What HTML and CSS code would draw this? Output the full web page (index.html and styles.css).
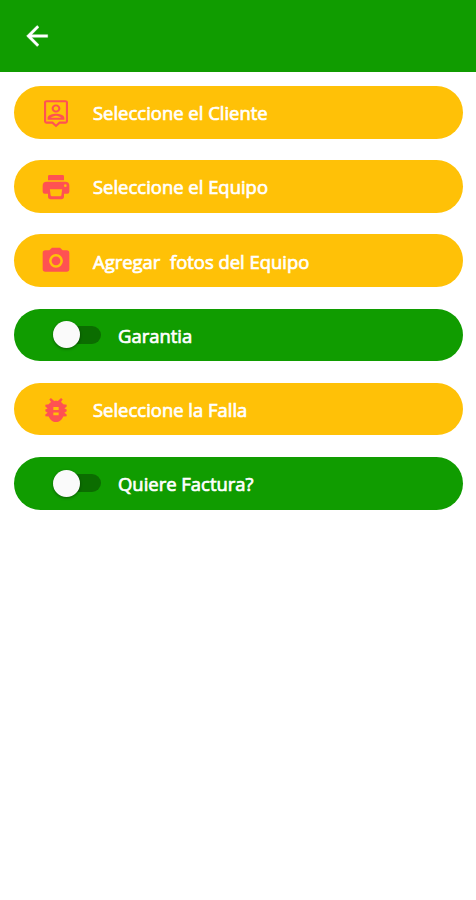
FILE: index.html
```html
<!DOCTYPE html>
<html lang="es">

<head>
    <meta charset="UTF-8">
    <meta name="viewport" content="width=device-width, initial-scale=1.0">
    <title>Orden</title>
    <link rel="stylesheet" href="styles.css">
</head>

<body>
    <header class="toolbar">
        <svg class="back" viewBox="0 0 24 24">
            <path d="M20 11v2H8l5.500 5.500-1.420 1.420L4.160 12l7.920-7.920L13.500 5.500 8 11h12z" />
        </svg>
    </header>
    <div class="list">
        <div class="item">
            <svg class="icon" viewBox="0 0 24 24">
                <path d="M19 2.400H5c-1.100 0-2 .7-2 1.600v14c0 1.100.9 2 2 2h4l3 2.700 3-2.700h4c1.100 0 2-.9 2-2V4c0-.9-.9-1.600-2-1.600zm.4 16h-5L12 20.600l-2.400-2.200H4.600V4h14.800v14.400zM12 11.600c1.850 0 3.300-1.350 3.300-3s-1.450-3-3.300-3-3.300 1.350-3.300 3 1.450 3 3.300 3zm0-4.600c.95 0 1.700.73 1.700 1.600s-.75 1.600-1.700 1.600-1.700-.73-1.700-1.600.75-1.600 1.700-1.600zM18.300 15.800c0-2.400-4-3.300-6.300-3.300s-6.300.9-6.300 3.300V17h12.600v-1.200zM8.200 15.500c.74-.7 2.300-1.500 3.800-1.500s3.060.8 3.800 1.500H8.200z" />
            </svg>
            <span class="text">Seleccione el Cliente</span>
        </div>
        <div class="item">
            <svg class="icon" viewBox="0 0 24 24">
                <path d="M7 3h10a1 1 0 0 1 1 1v3H6V4a1 1 0 0 1 1-1M19 12a1 1 0 0 1-1-1 1 1 0 0 1 1-1 1 1 0 0 1 1 1 1 1 0 0 1-1 1m-3 6.300L15.300 19H8.700L8 18.300 7.400 13.700h9.200m2.400-5.700H5a3 3 0 0 0-3 3v4.500a1.500 1.500 0 0 0 1.500 1.500H6v2.200a2 2 0 0 0 2 2h8a2 2 0 0 0 2-2V17h2.500a1.500 1.500 0 0 0 1.500-1.500V11a3 3 0 0 0-3-3z" />
            </svg>
            <span class="text">Seleccione el Equipo</span>
        </div>
        <div class="item">
            <svg class="icon" viewBox="0 0 24 24">
                <path d="M4 4h3l2-2h6l2 2h3a2 2 0 0 1 2 2v12a2 2 0 0 1-2 2H4a2 2 0 0 1-2-2V6a2 2 0 0 1 2-2m8 2.700a5.200 5.200 0 1 0 0 10.400 5.200 5.200 0 1 0 0-10.400m0 1.900a3.300 3.300 0 1 1 0 6.600 3.300 3.300 0 1 1 0-6.600z" />
            </svg>
            <span class="text">Agregar  fotos del Equipo</span>
        </div>
        <div class="item green">
            <div class="switch">
                <div class="thumb"></div>
            </div>
            <span class="text">Garantia</span>
        </div>
        <div class="item">
            <svg class="icon" viewBox="0 0 24 24">
                <path d="M20 8l-2.600-.3c-.4-.7-1-1.200-1.700-1.700L17 4.200 15.800 3l-2.400 2.170C12.960 5.060 12.490 5 12 5s-.96.06-1.410.17L8.200 3 7 4.200l1.300 1.800c-.7.5-1.300 1-1.700 1.700L4 8v1.300l1.700 1.500L4 11.700v1.300l1.700 1L4 15.300v1.300l2.600.2C7.500 19.300 9.500 21 12 21s4.500-1.700 5.400-4.200l2.600-.2v-1.300L18.300 14l1.700-1v-1.300l-1.700-.9L20 9.300V8zm-6 8h-4v-2.200h4V16zm0-4h-4V9.800h4V12z" />
            </svg>
            <span class="text">Seleccione la Falla</span>
        </div>
        <div class="item green">
            <div class="switch">
                <div class="thumb"></div>
            </div>
            <span class="text">Quiere Factura?</span>
        </div>
    </div>
</body>

</html>
```
FILE: styles.css
```css
body {
    margin: 0;
    background: #fff;
    font-family: "Open Sans", sans-serif;
}

.toolbar {
    display: flex;
    align-items: center;
    height: 72px;
    padding-left: 21px;
    background: #109c00;
}

.back {
    width: 32px;
    height: 32px;
    fill: #fff;
    stroke: #fff;
    stroke-width: .3;
}

.list {
    display: flex;
    flex-direction: column;
    gap: 21.600px;
    padding: 14px 13px 0 13.500px;
}

.item {
    display: flex;
    align-items: center;
    box-sizing: border-box;
    height: 52.600px;
    padding-left: 26.500px;
    border-radius: 27px;
    background: #ffc107;
}

.item.green {
    padding-left: 39.500px;
    background: #109c00;
}

.icon {
    width: 32px;
    height: 32px;
    margin-top: 1px;
    margin-right: 21px;
    fill: #ff5252;
}

.text {
    padding-top: 2px;
    color: #fff;
    font-size: 18.450px;
    line-height: 26px;
    white-space: pre;
    -webkit-text-stroke: .7px #fff;
}

.switch {
    display: flex;
    align-items: center;
    width: 48px;
    height: 18px;
    margin-right: 17px;
    border-radius: 9px;
    background: linear-gradient(to right, transparent 12px, #0b6d00 12px);
}

.thumb {
    width: 27px;
    height: 27px;
    border-radius: 50%;
    background: #fafafa;
    box-shadow: 0 1px 3px rgba(0, 0, 0, .4);
}
```
